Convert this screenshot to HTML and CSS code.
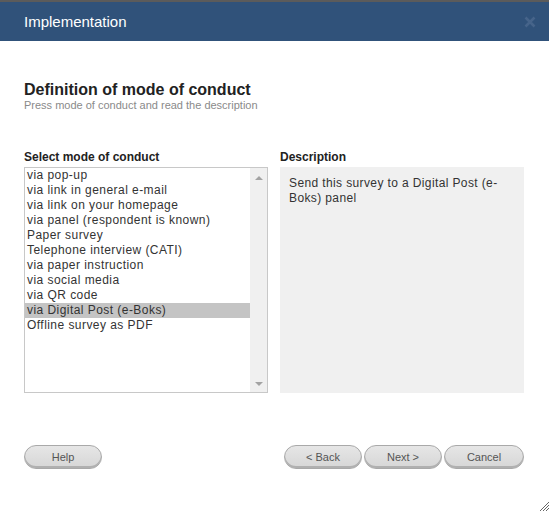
FILE: index.html
```html
<!DOCTYPE html>
<html>
<head>
<meta charset="utf-8">
<link rel="stylesheet" href="styles.css">
</head>
<body>
<div class="dialog">
  <div class="titlebar">
    <span class="title">Implementation</span>
    <svg class="close" width="12" height="12" viewBox="0 0 12 12"><path d="M1.5 1.5 L10.5 10.5 M10.5 1.5 L1.5 10.5" stroke="#46648a" stroke-width="2.6" stroke-linecap="butt"/></svg>
  </div>
  <div class="content">
    <h1 class="heading">Definition of mode of conduct</h1>
    <div class="sub">Press mode of conduct and read the description</div>
    <div class="columns">
      <div class="col">
        <div class="label">Select mode of conduct</div>
        <div class="listbox">
          <ul class="items">
            <li>via pop-up</li>
            <li>via link in general e-mail</li>
            <li>via link on your homepage</li>
            <li>via panel (respondent is known)</li>
            <li>Paper survey</li>
            <li>Telephone interview (CATI)</li>
            <li>via paper instruction</li>
            <li>via social media</li>
            <li>via QR code</li>
            <li class="selected">via Digital Post (e-Boks)</li>
            <li>Offline survey as PDF</li>
          </ul>
          <div class="scrollbar">
            <span class="arrow up"></span>
            <span class="arrow down"></span>
          </div>
        </div>
      </div>
      <div class="col">
        <div class="label">Description</div>
        <div class="descbox">Send this survey to a Digital Post (e-Boks) panel</div>
      </div>
    </div>
    <div class="buttons">
      <button class="btn">Help</button>
      <div class="btngroup">
        <button class="btn">&lt; Back</button>
        <button class="btn">Next &gt;</button>
        <button class="btn cancel">Cancel</button>
      </div>
    </div>
  </div>
  <svg class="grip" width="10" height="10" viewBox="0 0 10 10"><path d="M1 10 L10 1 M4 10 L10 4 M7 10 L10 7" stroke="#666" stroke-width="1"/></svg>
</div>
</body>
</html>
```
FILE: styles.css
```css
html, body {
  margin: 0;
  padding: 0;
  background: #fff;
}
body {
  font-family: "Liberation Sans", Arial, sans-serif;
  width: 549px;
  height: 511px;
  overflow: hidden;
}
.dialog {
  position: relative;
  width: 549px;
  height: 511px;
}
.titlebar {
  height: 39px;
  border-top: 2px solid #5b5b5b;
  background: #30527a;
  display: flex;
  align-items: center;
  justify-content: space-between;
  padding: 0 13px 0 24px;
}
.title {
  color: #fff;
  font-size: 15px;
  margin-top: -1px;
}
.close {
  display: block;
  margin-top: 1px;
}
.content {
  padding: 39px 25px 0 24px;
}
.heading {
  margin: 0;
  font-size: 16px;
  font-weight: bold;
  color: #222;
  line-height: 19px;
}
.sub {
  font-size: 11px;
  color: #8a8a8a;
  line-height: 13px;
}
.columns {
  display: flex;
  gap: 12px;
  margin-top: 38px;
}
.col {
  width: 244px;
}
.label {
  font-size: 12px;
  font-weight: bold;
  color: #222;
  line-height: 15px;
  margin-bottom: 2px;
}
.listbox {
  height: 224px;
  border: 1px solid #c8c8c8;
  display: flex;
  background: #fff;
}
.items {
  list-style: none;
  margin: 0;
  padding: 0;
  flex: 1;
}
.items li {
  font-size: 12px;
  color: #333;
  height: 15px;
  line-height: 15px;
  padding-left: 2px;
  letter-spacing: 0.45px;
  white-space: nowrap;
}
.items li.selected {
  background: #c4c4c4;
}
.scrollbar {
  width: 17px;
  background: #f0f0f0;
  display: flex;
  flex-direction: column;
  justify-content: space-between;
  align-items: center;
  padding: 8px 0 6px;
}
.arrow {
  width: 0;
  height: 0;
  border-left: 4px solid transparent;
  border-right: 4px solid transparent;
}
.arrow.up {
  border-bottom: 4px solid #a3a3a3;
}
.arrow.down {
  border-top: 4px solid #a3a3a3;
}
.descbox {
  background: #f0f0f0;
  padding: 8px;
  font-size: 12px;
  color: #333;
  line-height: 15px;
  letter-spacing: 0.38px;
  border: 1px solid #f0f0f0;
  height: 208px;
}
.buttons {
  display: flex;
  justify-content: space-between;
  margin-top: 52px;
}
.btngroup {
  display: flex;
  gap: 2px;
}
.btn {
  width: 78px;
  height: 24px;
  border: 1px solid #a9a9a9;
  border-radius: 12px;
  background: linear-gradient(#e6e6e6, #d6d6d6);
  box-shadow: inset 0 -2px 0 #b0b0b0;
  font-family: "Liberation Sans", Arial, sans-serif;
  font-size: 11px;
  color: #555;
  padding: 0 0 1px;
}
.btn.cancel {
  width: 80px;
}
.grip {
  position: absolute;
  right: 0;
  bottom: 0;
}
```
